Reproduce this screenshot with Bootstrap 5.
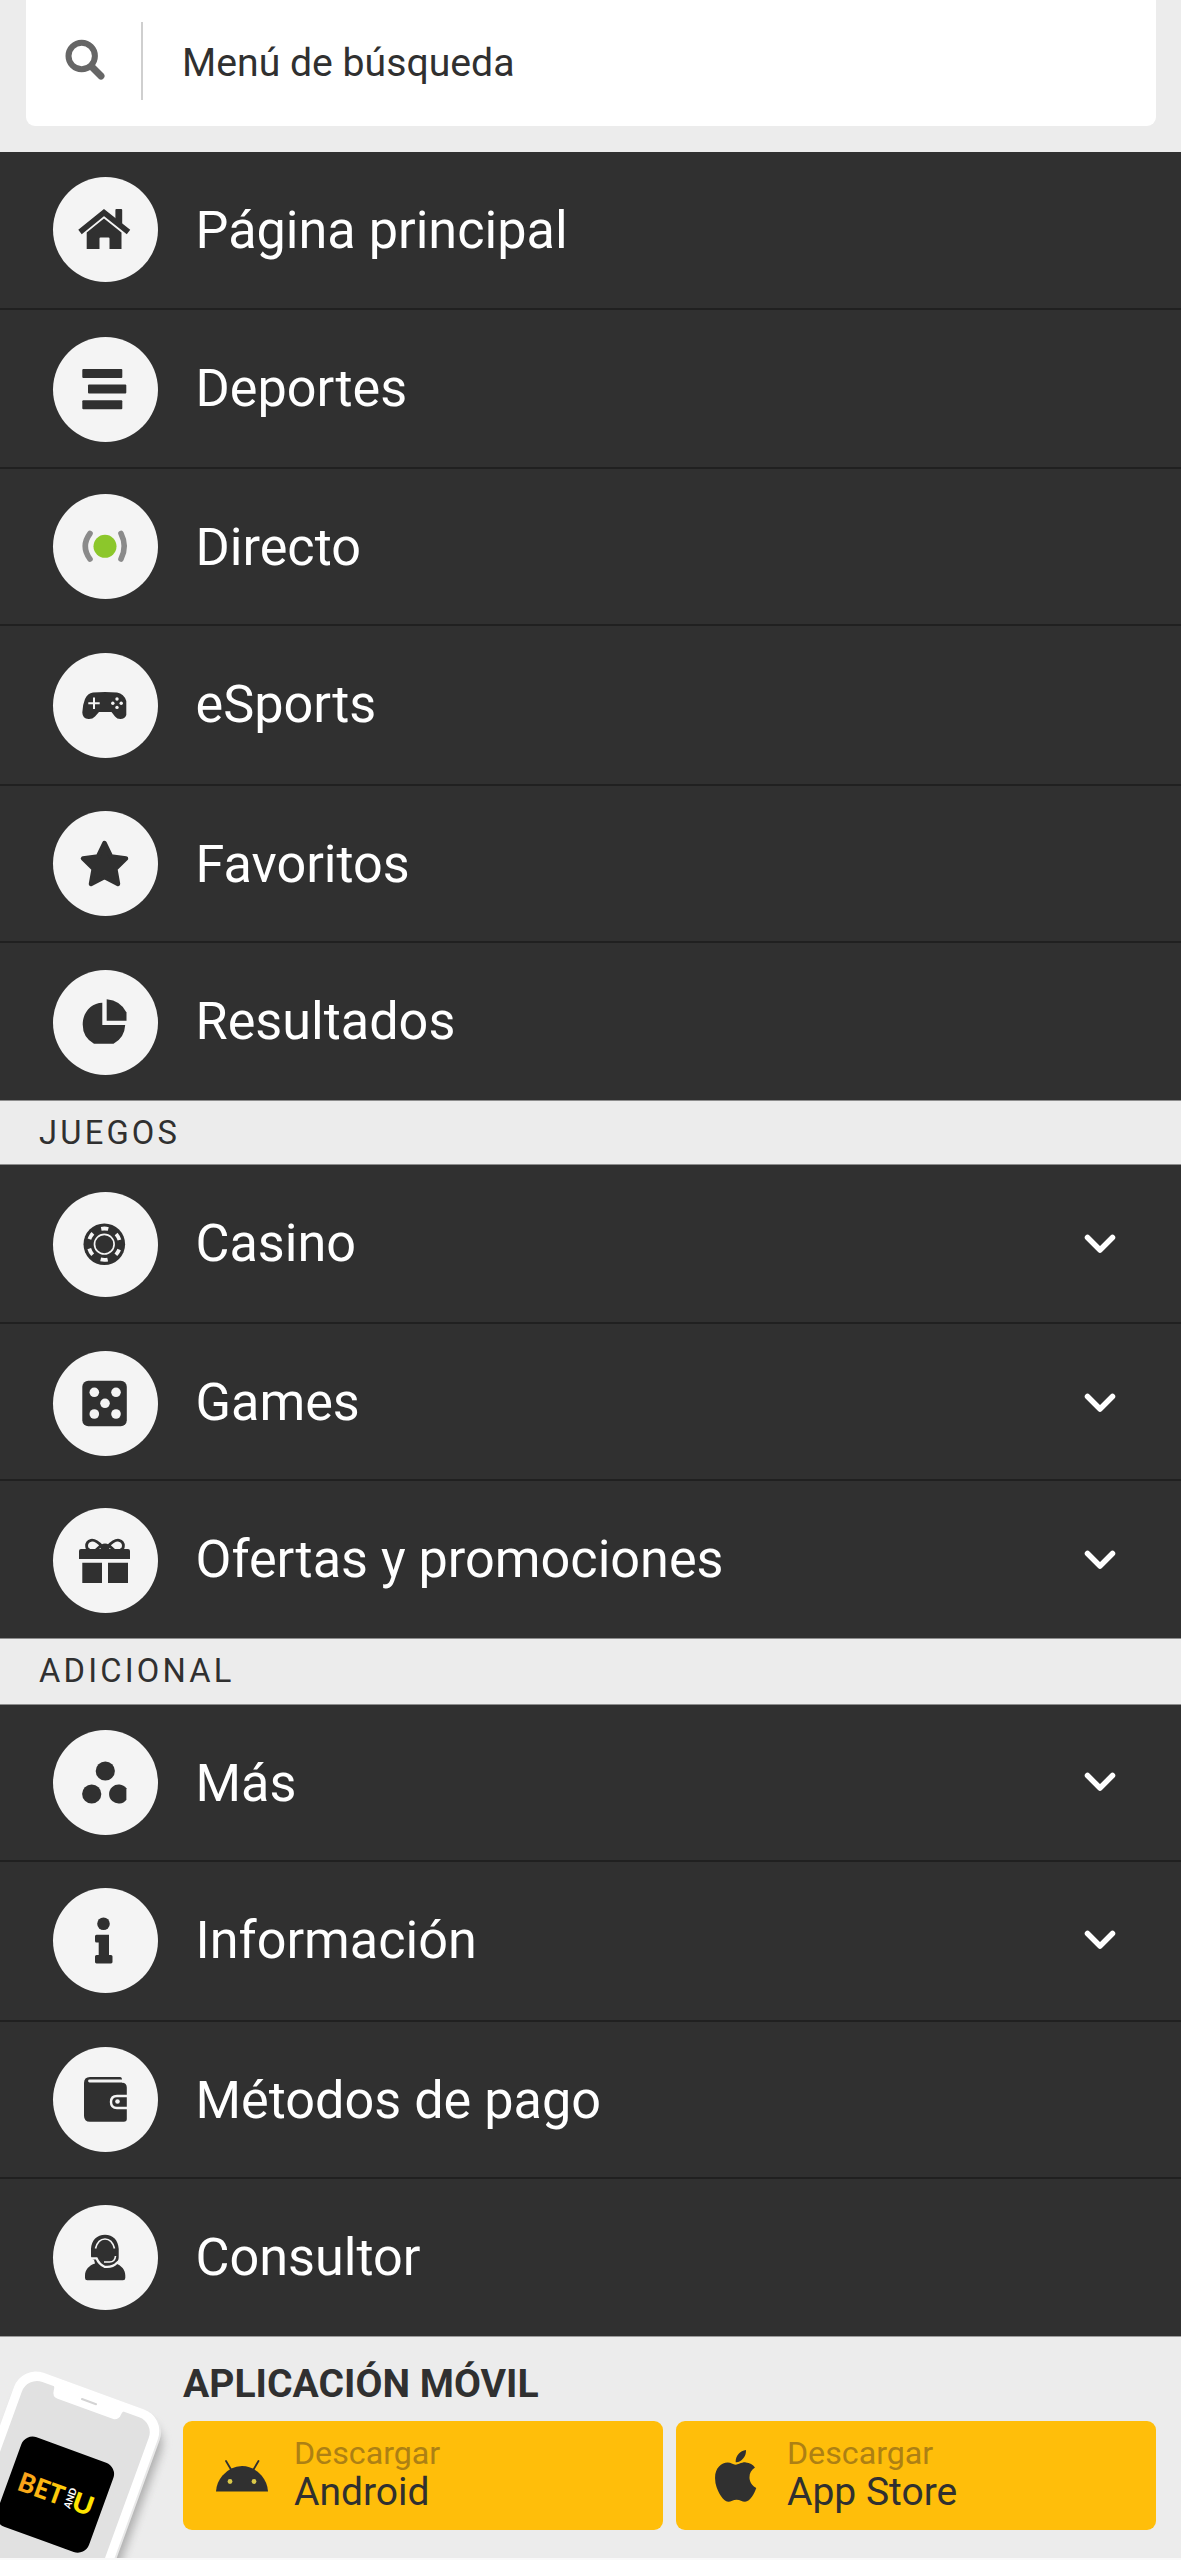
<!DOCTYPE html>
<html lang="es">
<head>
<meta charset="utf-8">
<meta name="viewport" content="width=device-width, initial-scale=1">
<title>Menú</title>
<link href="https://cdn.jsdelivr.net/npm/bootstrap@5.3.0/dist/css/bootstrap.min.css" rel="stylesheet">
<style>
  body { font-family: Roboto, "Liberation Sans", sans-serif; background: #ececec; color: #303030; }
  svg { display: block; }
  .screen { height: 2560px; overflow: hidden; border-bottom: 2px solid #f9f9f9; }
  .search-wrap { height: 152px; padding: 0 25px 26px 26px; }
  .search-box { height: 126px; border-radius: 0 0 9px 9px; }
  .search-icon { margin: 39px 36px 0 39px; }
  .search-rule { width: 2px; height: 78px; margin-top: 22px; background: #cfcfcf; }
  .search-text { font-size: 39.2px; line-height: 50px; margin: 38px 0 0 39px; }

  .menu-row { --h: 158px; --c: 25px; --t: 50px; height: var(--h); padding: 0 65px 0 53px; background: #303030; color: #fff; border-bottom: 2px solid #202020; text-decoration: none; }
  .menu-row:last-child { border-bottom: 0; }
  .menu-icon { width: 105px; height: 105px; margin-top: var(--c); background: #f4f4f4; color: #303030; }
  .menu-text { font-size: 52.2px; line-height: 60px; margin: var(--t) 0 0 37.500px; }
  .menu-chevron { margin-top: calc(var(--c) + 42px); }
  .menu-main :nth-child(2) { --h: 159px; --c: 27px; --t: 49px; }
  .menu-main :nth-child(3) { --h: 157px; }
  .menu-main :nth-child(4) { --h: 160px; --c: 27px; --t: 51px; }
  .menu-main :nth-child(5) { --h: 157px; --t: 49px; }
  .menu-main :nth-child(6) { --h: 157px; --c: 27px; --t: 49px; }
  .menu-games :nth-child(1) { --h: 159px; --c: 27px; --t: 49px; }
  .menu-games :nth-child(2) { --h: 157px; --c: 25px; --t: 49px; }
  .menu-games :nth-child(3) { --h: 157px; --c: 27px; --t: 51px; }
  .menu-extra :nth-child(1) { --h: 157px; --t: 46px; }
  .menu-extra :nth-child(2) { --h: 160px; --c: 26px; --t: 49px; }
  .menu-extra :nth-child(3) { --h: 157px; --t: 46px; }
  .menu-extra :nth-child(4) { --h: 157px; --c: 26px; --t: 50px; }

  .section-label { height: 65px; border-top: 1px solid #8d8d8d; border-bottom: 1px solid #8d8d8d; padding-left: 39px; font-size: 32.7px; line-height: 64px; letter-spacing: 3.2px; }
  .section-label.tall { height: 67px; line-height: 65px; }

  .app-strip { height: 222px; border-top: 1px solid #9a9a9a; }
  .app-phone { width: 183px; height: 221px; }
  .app-title { font-size: 39.1px; line-height: 44px; margin: 25px 0 15px; font-weight: 700; }
  .app-side { padding-right: 25px; }
  .store-btn { height: 109px; border-radius: 9px; background: #ffbe0a; color: #303030; text-decoration: none; }
  .store-icon { width: 112px; height: 110px; margin-right: -1px; }
  .store-top { font-size: 32.2px; line-height: 36px; margin-top: 14px; color: #ad8014; }
  .store-name { font-size: 39px; line-height: 43px; }
</style>
</head>
<body>
<div class="screen">
  <header class="search-wrap">
    <div class="search-box bg-white d-flex align-items-start">
      <svg class="search-icon" width="40" height="42" viewBox="65 39 40 42" fill="none" stroke="#666" stroke-linecap="round"><ellipse cx="81.7" cy="56" rx="13.2" ry="13.2" stroke-width="6"/><path d="M92 67l9 9" stroke-width="7"/></svg>
      <div class="search-rule"></div>
      <div class="search-text">Menú de búsqueda</div>
    </div>
  </header>

  <nav class="menu-main">
    <a class="menu-row d-flex align-items-start">
      <span class="menu-icon rounded-circle"><svg viewBox="0 0 105 105" fill="currentColor"><path d="M27 55L51 35.5 75.500 55" fill="none" stroke="currentColor" stroke-width="5.500"/><path d="M62.400 33q0-1 1-1h4.800q1 0 1 1v17l-6.800-6z"/><path d="M33.700 55.500L51 41.500l17.500 14V72h-12V61.500q0-1-1-1h-8q-1 0-1 1V72H33.700z"/></svg></span>
      <span class="menu-text">Página principal</span>
    </a>
    <a class="menu-row d-flex align-items-start">
      <span class="menu-icon rounded-circle"><svg viewBox="0 0 105 105" fill="currentColor"><rect x="29.300" y="32" width="40" height="9" rx="1"/><rect x="35" y="47.600" width="38.300" height="9" rx="1"/><rect x="29.300" y="63.200" width="40" height="9" rx="1"/></svg></span>
      <span class="menu-text">Deportes</span>
    </a>
    <a class="menu-row d-flex align-items-start">
      <span class="menu-icon rounded-circle"><svg viewBox="0 0 105 105"><circle cx="52" cy="52.300" r="11.500" fill="#8cc72b"/><path d="M37 39.500q-9.500 12.800 0 25.600M68 39.500q6.500 12.800 0 25.600" fill="none" stroke="#8a8a8a" stroke-width="5.600" stroke-linecap="round"/></svg></span>
      <span class="menu-text">Directo</span>
    </a>
    <a class="menu-row d-flex align-items-start">
      <span class="menu-icon rounded-circle"><svg viewBox="0 0 105 105"><path d="M40 39.500q12-1.200 24 0 7 1.200 9.300 8.500V62q-1.300 4-6 4-3.300 0-5.300-2.500l-3.500-4.500h-12.500L42 63.500q-2.500 2.700-6.500 2.500-6-.5-6.200-6.500Q29.500 52 32 46q2.500-5.700 8-6.500z" fill="currentColor"/><path d="M35.300 50.200h11.400M41 44.500v11.400" stroke="#f4f4f4" stroke-width="2"/><g fill="#f4f4f4"><circle cx="64" cy="46" r="1.700"/><circle cx="64" cy="54.400" r="1.700"/><circle cx="59.800" cy="50.200" r="1.700"/><circle cx="68.200" cy="50.200" r="1.700"/></g></svg></span>
      <span class="menu-text">eSports</span>
    </a>
    <a class="menu-row d-flex align-items-start">
      <span class="menu-icon rounded-circle"><svg viewBox="0 0 105 105"><path d="M51.500 32L58 45.500l15 2L62.300 58l2.700 15-13.500-7L38 73l2.700-15L30 47.500l15-2z" fill="currentColor" stroke="currentColor" stroke-width="4.500" stroke-linejoin="round"/></svg></span>
      <span class="menu-text">Favoritos</span>
    </a>
    <a class="menu-row d-flex align-items-start">
      <span class="menu-icon rounded-circle"><svg viewBox="0 0 105 105" fill="currentColor"><path d="M49.300 32.700V55H72.200Q71.500 68 60.500 73.700H41Q29.700 67.500 29.700 54.500C29.700 42 38.500 33 49.300 32.700z"/><path d="M53.700 29.300Q67.500 30.500 73.500 42.500V50.700H53.700z"/></svg></span>
      <span class="menu-text">Resultados</span>
    </a>
  </nav>

  <div class="section-label">JUEGOS</div>

  <nav class="menu-games">
    <a class="menu-row d-flex align-items-start">
      <span class="menu-icon rounded-circle"><svg viewBox="0 0 105 105"><circle cx="51.300" cy="52.200" r="20.800" fill="currentColor"/><g fill="none" stroke="#f4f4f4"><circle cx="51.300" cy="52.200" r="9.800" stroke-width="1.700"/><circle cx="51.300" cy="52.200" r="15.700" stroke-width="3.800" stroke-dasharray="7 9.440" stroke-dashoffset="3.500" transform="rotate(30 51.300 52.200)"/></g></svg></span>
      <span class="menu-text">Casino</span>
      <svg class="menu-chevron ms-auto" width="32" height="20" viewBox="0 0 32 20"><path d="M3.500 3.500L16 16 28.500 3.500" fill="none" stroke="#fff" stroke-width="5.500" stroke-linecap="round" stroke-linejoin="round"/></svg>
    </a>
    <a class="menu-row d-flex align-items-start">
      <span class="menu-icon rounded-circle"><svg viewBox="0 0 105 105"><rect x="29.300" y="29.700" width="44.500" height="45.600" rx="6" fill="currentColor"/><g fill="#f4f4f4"><circle cx="41.300" cy="41.300" r="4.800"/><circle cx="63" cy="41.300" r="4.800"/><circle cx="52" cy="52.300" r="4.800"/><circle cx="41.300" cy="63" r="4.800"/><circle cx="63" cy="63" r="4.800"/></g></svg></span>
      <span class="menu-text">Games</span>
      <svg class="menu-chevron ms-auto" width="32" height="20" viewBox="0 0 32 20"><path d="M3.500 3.500L16 16 28.500 3.500" fill="none" stroke="#fff" stroke-width="5.500" stroke-linecap="round" stroke-linejoin="round"/></svg>
    </a>
    <a class="menu-row d-flex align-items-start">
      <span class="menu-icon rounded-circle"><svg viewBox="0 0 105 105" fill="currentColor"><path d="M26 43q0-2 2-2h47q2 0 2 2v8H26zM29.300 54.700H49V75H29.300zM55 54.700h20V75H55z"/><path d="M49 38.500Q43 31.500 38 32.300 33.500 33.500 33.600 38q.1 3.500 3 4M55 38.500Q61 31.500 66 32.300q4.500 1.200 4.400 5.700-.1 3.500-3 4M48 37.500l-5 4.500M56 37.500l5 4.500" fill="none" stroke="currentColor" stroke-width="2.800"/><ellipse cx="52" cy="39" rx="5" ry="3.500"/></svg></span>
      <span class="menu-text">Ofertas y promociones</span>
      <svg class="menu-chevron ms-auto" width="32" height="20" viewBox="0 0 32 20"><path d="M3.500 3.500L16 16 28.500 3.500" fill="none" stroke="#fff" stroke-width="5.500" stroke-linecap="round" stroke-linejoin="round"/></svg>
    </a>
  </nav>

  <div class="section-label tall">ADICIONAL</div>

  <nav class="menu-extra">
    <a class="menu-row d-flex align-items-start">
      <span class="menu-icon rounded-circle"><svg viewBox="0 0 105 105" fill="currentColor"><circle cx="52.300" cy="41" r="9.600"/><circle cx="38.700" cy="64" r="9.600"/><path d="M73.400 58.300a9.600 9.600 0 1 0 0 11.400z"/></svg></span>
      <span class="menu-text">Más</span>
      <svg class="menu-chevron ms-auto" width="32" height="20" viewBox="0 0 32 20"><path d="M3.500 3.500L16 16 28.500 3.500" fill="none" stroke="#fff" stroke-width="5.500" stroke-linecap="round" stroke-linejoin="round"/></svg>
    </a>
    <a class="menu-row d-flex align-items-start">
      <span class="menu-icon rounded-circle"><svg viewBox="0 0 105 105" fill="currentColor"><circle cx="50.500" cy="35.800" r="6.300"/><path d="M43.500 46.700H56V67h2q1.500 0 1.500 1.500V74q0 1.400-1.500 1.400H43.500Q42 75.400 42 74v-5.500Q42 67 43.500 67h2.200V54.500h-2.200Q42 54.500 42 53v-4.800q0-1.500 1.500-1.500z"/></svg></span>
      <span class="menu-text">Información</span>
      <svg class="menu-chevron ms-auto" width="32" height="20" viewBox="0 0 32 20"><path d="M3.500 3.500L16 16 28.500 3.500" fill="none" stroke="#fff" stroke-width="5.500" stroke-linecap="round" stroke-linejoin="round"/></svg>
    </a>
    <a class="menu-row d-flex align-items-start">
      <span class="menu-icon rounded-circle"><svg viewBox="0 0 105 105"><path d="M37 30h30q2 0 2 3v2.500q4.800.5 4.800 5V72q0 2.800-3 2.800H37q-6 0-6-6V36q0-6 6-6z" fill="currentColor"/><path d="M36.500 34H70" stroke="#f4f4f4" stroke-width="2.800" stroke-linecap="round"/><path d="M75 49H64q-6 0-6 6t6 6h11" fill="none" stroke="#f4f4f4" stroke-width="2.400"/><circle cx="64.500" cy="54.500" r="2.300" fill="#f4f4f4"/></svg></span>
      <span class="menu-text">Métodos de pago</span>
    </a>
    <a class="menu-row d-flex align-items-start">
      <span class="menu-icon rounded-circle"><svg viewBox="0 0 105 105"><path d="M52 29.700c8 0 13.200 5.500 13.700 14v8.500c0 3-1.200 5-3.200 6.300 6 1.800 9.800 6.500 9.800 12V73q0 2.300-2.300 2.300H34.300Q32 75.300 32 73v-2.500c0-5.500 4-10.200 10-12l-1-3.800q-3-.8-3-4v-7c.5-8.500 6-14 14-14z" fill="currentColor"/><g fill="none" stroke="#f4f4f4" stroke-width="2.300"><path d="M42.500 43.500q2.500-9.500 9.500-9.500t9.500 9.500" stroke-width="1.700"/><path d="M38 53.300h5.500q2.500 6 8 8.500 8 1 12.500-4l3-2.500"/><path d="M62.500 51q-.5 6-6 6H51" stroke-width="1.600"/></g></svg></span>
      <span class="menu-text">Consultor</span>
    </a>
  </nav>

  <footer class="app-strip d-flex">
    <svg class="app-phone flex-shrink-0" viewBox="0 7 183 221">
      <defs>
        <linearGradient id="gold" x1="0" x2="1"><stop offset="0" stop-color="#f99d1c"/><stop offset="1" stop-color="#ffd208"/></linearGradient>
        <filter id="soft" x="-20%" y="-20%" width="140%" height="140%"><feGaussianBlur stdDeviation="5"/></filter>
      </defs>
      <g transform="translate(22 35) rotate(20)">
        <rect x="8" y="10" width="152" height="300" rx="24" fill="#8c8c8c" opacity=".65" filter="url(#soft)"/>
        <rect width="155" height="300" rx="23" fill="#e8e8e8"/>
        <rect width="153" height="300" rx="23" fill="#fff"/>
        <rect x="9" y="9" width="135" height="290" rx="16" fill="#e1e1e1"/>
        <path d="M33 6h82q-5 2-5 7t-5 6.500H45q-6 0-6.500-6.500T33 6z" fill="#fff"/>
        <rect x="67" y="10.500" width="17" height="2" rx="1" fill="#d4d4d4"/>
        <rect x="26.500" y="63" width="98" height="95" rx="12" fill="#000"/>
        <g font-family="Lato, sans-serif" font-weight="900">
          <text x="37" y="119" font-size="26.500" textLength="47" lengthAdjust="spacingAndGlyphs" fill="url(#gold)">BET</text>
          <text transform="translate(94.500 119) rotate(-90)" font-size="10" textLength="21" lengthAdjust="spacingAndGlyphs" fill="#fff">AND</text>
          <text x="94.500" y="119" font-size="26.500" textLength="21" lengthAdjust="spacingAndGlyphs" fill="#ffe500">U</text>
        </g>
      </g>
    </svg>
    <div class="app-side flex-grow-1">
      <div class="app-title">APLICACIÓN MÓVIL</div>
      <div class="d-flex" style="gap: 13px">
        <a class="store-btn d-flex flex-fill w-50">
          <svg class="store-icon flex-shrink-0" viewBox="183 2421 112 110"><path d="M216 2491.500q.5-9 6.500-16 8-9.200 19.500-9.500 11.500.3 19.500 9.500 6 7 6.500 16z" fill="#303030"/><path d="M226 2461l5 8.500M258.500 2461l-5 8.500" stroke="#303030" stroke-width="1.800" stroke-linecap="round"/><circle cx="230" cy="2481.500" r="2.400" fill="#d9c84a"/><circle cx="254" cy="2481.500" r="2.400" fill="#d9c84a"/></svg>
          <span class="d-flex flex-column"><span class="store-top">Descargar</span><span class="store-name">Android</span></span>
        </a>
        <a class="store-btn d-flex flex-fill w-50">
          <svg class="store-icon flex-shrink-0" viewBox="676 2421 112 110"><path transform="translate(714.600 2446.300) scale(.1095 .1155)" fill="#303030" d="M318.700 268.700c-.2-36.700 16.400-64.400 50-84.800-18.800-26.900-47.200-41.700-84.700-44.600-35.500-2.800-74.300 20.700-88.500 20.700-15 0-49.400-19.700-76.400-19.700C63.300 141.200 4 184.800 4 273.500q0 39.300 14.400 81.200c12.800 36.700 59 126.700 107.200 125.200 25.200-.6 43-17.900 75.800-17.900 31.800 0 48.300 17.900 76.400 17.900 48.600-.7 90.400-82.500 102.600-119.300-65.200-30.700-61.700-90-61.700-91.900zm-56.600-164.200c27.300-32.400 24.800-61.900 24-72.500-24.100 1.400-52 16.400-67.900 34.900-17.500 19.800-27.800 44.300-25.600 71.900 26.100 2 49.900-11.400 69.500-34.300z"/></svg>
          <span class="d-flex flex-column"><span class="store-top">Descargar</span><span class="store-name">App Store</span></span>
        </a>
      </div>
    </div>
  </footer>
</div>
<script src="https://cdn.jsdelivr.net/npm/bootstrap@5.3.0/dist/js/bootstrap.bundle.min.js"></script>
</body>
</html>
